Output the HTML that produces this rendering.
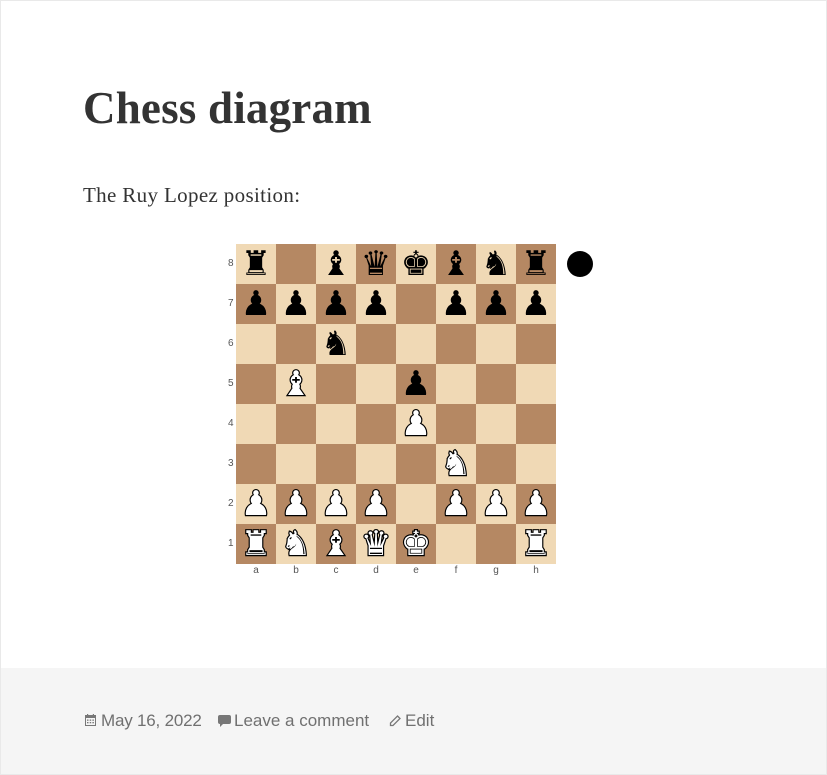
<!DOCTYPE html>
<html><head><meta charset="utf-8">
<style>
html,body{margin:0;padding:0;}
body{width:827px;height:775px;background:#e9e9e9;position:relative;overflow:hidden;font-family:"Liberation Serif",serif;}
.card{position:absolute;left:1px;top:1px;width:825px;height:773px;background:#fff;}
.foot{position:absolute;left:1px;top:668px;width:825px;height:106px;background:#f5f5f5;}
h1{position:absolute;left:83px;top:82px;margin:0;font-size:45px;letter-spacing:0.2px;font-weight:bold;color:#333;line-height:52px;}
p{position:absolute;left:83px;top:181px;margin:0;font-size:21px;letter-spacing:0.35px;color:#333;line-height:28px;}
.board{position:absolute;left:236px;top:244px;width:320px;height:320px;display:grid;grid-template-columns:repeat(8,40px);grid-template-rows:repeat(8,40px);}
.sq{display:flex;align-items:center;justify-content:center;font-family:"DejaVu Sans",sans-serif;font-size:34px;line-height:40px;color:#000;}
.w{color:#fff;-webkit-text-stroke:2.4px #000;paint-order:stroke fill;}
.l{background:#f0d9b5}.d{background:#b58863}
.rk{position:absolute;left:228px;width:8px;font-family:"Liberation Sans",sans-serif;font-size:10px;color:#555;}
.fl{position:absolute;top:565px;width:40px;text-align:center;font-family:"Liberation Sans",sans-serif;font-size:10px;color:#555;}
.dot{position:absolute;left:567px;top:251px;width:26px;height:26px;border-radius:50%;background:#000;}
.meta{position:absolute;top:710px;font-family:"Liberation Sans",sans-serif;font-size:17px;color:#707070;line-height:22px;}
</style></head><body>
<div class="card"></div>
<div class="foot"></div>
<h1>Chess diagram</h1>
<p>The Ruy Lopez position:</p>
<div class="board" id="b"></div>
<div class="dot"></div>
<div class="rk" style="top:258px">8</div><div class="rk" style="top:298px">7</div><div class="rk" style="top:338px">6</div><div class="rk" style="top:378px">5</div><div class="rk" style="top:418px">4</div><div class="rk" style="top:458px">3</div><div class="rk" style="top:498px">2</div><div class="rk" style="top:538px">1</div>
<div class="fl" style="left:236px">a</div><div class="fl" style="left:276px">b</div><div class="fl" style="left:316px">c</div><div class="fl" style="left:356px">d</div><div class="fl" style="left:396px">e</div><div class="fl" style="left:436px">f</div><div class="fl" style="left:476px">g</div><div class="fl" style="left:516px">h</div>
<svg style="position:absolute;left:85px;top:714px" width="11" height="12" viewBox="0 0 11 12"><rect x="0.5" y="1.5" width="10" height="10" fill="none" stroke="#777"/><rect x="0.5" y="1.5" width="10" height="2.5" fill="#777"/><rect x="2" y="0" width="1.2" height="2.5" fill="#777"/><rect x="7.8" y="0" width="1.2" height="2.5" fill="#777"/><g fill="#777"><rect x="2" y="5.5" width="1.5" height="1.3"/><rect x="4.7" y="5.5" width="1.5" height="1.3"/><rect x="7.4" y="5.5" width="1.5" height="1.3"/><rect x="2" y="8" width="1.5" height="1.3"/><rect x="4.7" y="8" width="1.5" height="1.3"/><rect x="7.4" y="8" width="1.5" height="1.3"/></g></svg>
<div class="meta" style="left:101px;letter-spacing:-0.2px">May 16, 2022</div>
<svg style="position:absolute;left:218px;top:715px" width="13" height="12" viewBox="0 0 13 12"><path d="M2 0h9a2 2 0 0 1 2 2v5a2 2 0 0 1-2 2H5l-3 3v-3a2 2 0 0 1-2-2V2a2 2 0 0 1 2-2z" fill="#777"/></svg>
<div class="meta" style="left:234px">Leave a comment</div>
<svg style="position:absolute;left:389px;top:715px" width="12" height="12" viewBox="0 0 12 12"><path d="M8.5 1l2.5 2.5-7 7H1.5V8z" fill="none" stroke="#777" stroke-width="1.3"/></svg>
<div class="meta" style="left:405px">Edit</div>
<script>
var rows=["r_bqkbnr","pppp_ppp","__n_____","_B__p___","____P___","_____N__","PPPP_PPP","RNBQK__R"];
var g={k:"♚",q:"♛",r:"♜",b:"♝",n:"♞",p:"♟"};
var h="";for(var r=0;r<8;r++){for(var c=0;c<8;c++){var ch=rows[r][c];var cls='sq '+((r+c)%2?'d':'l');var t='';
if(ch!='_'){var lo=ch.toLowerCase();t=g[lo];if(ch!=lo)cls+=' w';}
h+='<div class="'+cls+'">'+t+'</div>';}}
document.getElementById('b').innerHTML=h;
</script>
</body></html>
